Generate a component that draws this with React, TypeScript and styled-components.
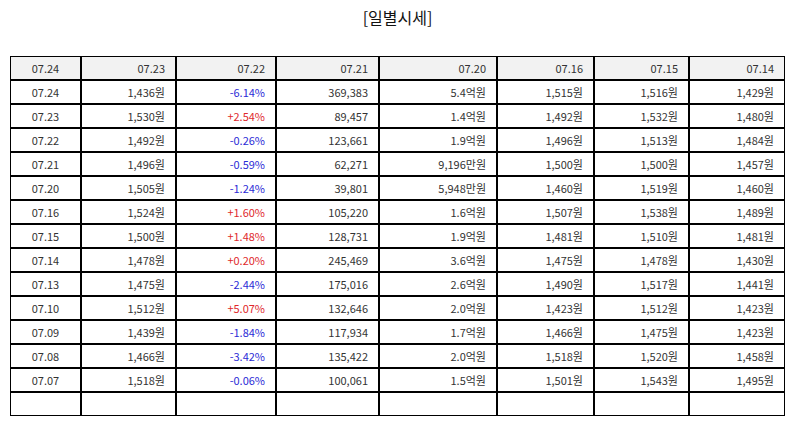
import React from "react";
import styled, { createGlobalStyle } from "styled-components";

const Global = createGlobalStyle`
  html, body { margin: 0; padding: 0; background: #fff; }
  body { font-family: "Noto Sans CJK KR", "Noto Sans", sans-serif; }
`;

const Page = styled.div`
  padding: 0 10px;
`;

const Title = styled.h2`
  margin: 0;
  height: 56px;
  padding-top: 5px;
  box-sizing: border-box;
  text-align: center;
  font-size: 16px;
  font-weight: 400;
  line-height: 24px;
  color: #111;
`;

const Table = styled.table`
  width: 775px;
  border-collapse: separate;
  border-spacing: 0;
  table-layout: fixed;
  font-size: 11px;
  color: #333;
`;

const Row = styled.tr`
  height: 24px;
`;

const Cell = styled.td<{ $center?: boolean; $tone?: "up" | "down"; $head?: boolean }>`
  border: 1px solid #000;
  height: 24px;
  padding: 0 10px;
  box-sizing: border-box;
  text-align: ${(p) => (p.$center ? "center" : "right")};
  background: ${(p) => (p.$head ? "#f2f2f2" : "#fff")};
  color: ${(p) => (p.$tone === "up" ? "#e0282c" : p.$tone === "down" ? "#2b2bd6" : "#333")};
  font-weight: 400;
  white-space: nowrap;
  line-height: 22px;
`;

const widths = [71, 95, 100, 103, 118, 97, 95, 96];
const header = ["07.24", "07.23", "07.22", "07.21", "07.20", "07.16", "07.15", "07.14"];

const rows: string[][] = [
  ["07.24", "1,436원", "-6.14%", "369,383", "5.4억원", "1,515원", "1,516원", "1,429원"],
  ["07.23", "1,530원", "+2.54%", "89,457", "1.4억원", "1,492원", "1,532원", "1,480원"],
  ["07.22", "1,492원", "-0.26%", "123,661", "1.9억원", "1,496원", "1,513원", "1,484원"],
  ["07.21", "1,496원", "-0.59%", "62,271", "9,196만원", "1,500원", "1,500원", "1,457원"],
  ["07.20", "1,505원", "-1.24%", "39,801", "5,948만원", "1,460원", "1,519원", "1,460원"],
  ["07.16", "1,524원", "+1.60%", "105,220", "1.6억원", "1,507원", "1,538원", "1,489원"],
  ["07.15", "1,500원", "+1.48%", "128,731", "1.9억원", "1,481원", "1,510원", "1,481원"],
  ["07.14", "1,478원", "+0.20%", "245,469", "3.6억원", "1,475원", "1,478원", "1,430원"],
  ["07.13", "1,475원", "-2.44%", "175,016", "2.6억원", "1,490원", "1,517원", "1,441원"],
  ["07.10", "1,512원", "+5.07%", "132,646", "2.0억원", "1,423원", "1,512원", "1,423원"],
  ["07.09", "1,439원", "-1.84%", "117,934", "1.7억원", "1,466원", "1,475원", "1,423원"],
  ["07.08", "1,466원", "-3.42%", "135,422", "2.0억원", "1,518원", "1,520원", "1,458원"],
  ["07.07", "1,518원", "-0.06%", "100,061", "1.5억원", "1,501원", "1,543원", "1,495원"],
  ["", "", "", "", "", "", "", ""],
];

const toneOf = (v: string): "up" | "down" | undefined =>
  v.startsWith("+") ? "up" : v.startsWith("-") ? "down" : undefined;

export default function App() {
  return (
    <Page>
      <Global />
      <Title>[일별시세]</Title>
      <Table>
        <colgroup>
          {widths.map((w, i) => (
            <col key={i} style={{ width: w }} />
          ))}
        </colgroup>
        <thead>
          <Row>
            {header.map((h, i) => (
              <Cell as="th" key={i} $head $center={i === 0}>
                {h}
              </Cell>
            ))}
          </Row>
        </thead>
        <tbody>
          {rows.map((r, ri) => (
            <Row key={ri}>
              {r.map((v, ci) => (
                <Cell key={ci} $center={ci === 0} $tone={ci === 2 ? toneOf(v) : undefined}>
                  {v}
                </Cell>
              ))}
            </Row>
          ))}
        </tbody>
      </Table>
    </Page>
  );
}
